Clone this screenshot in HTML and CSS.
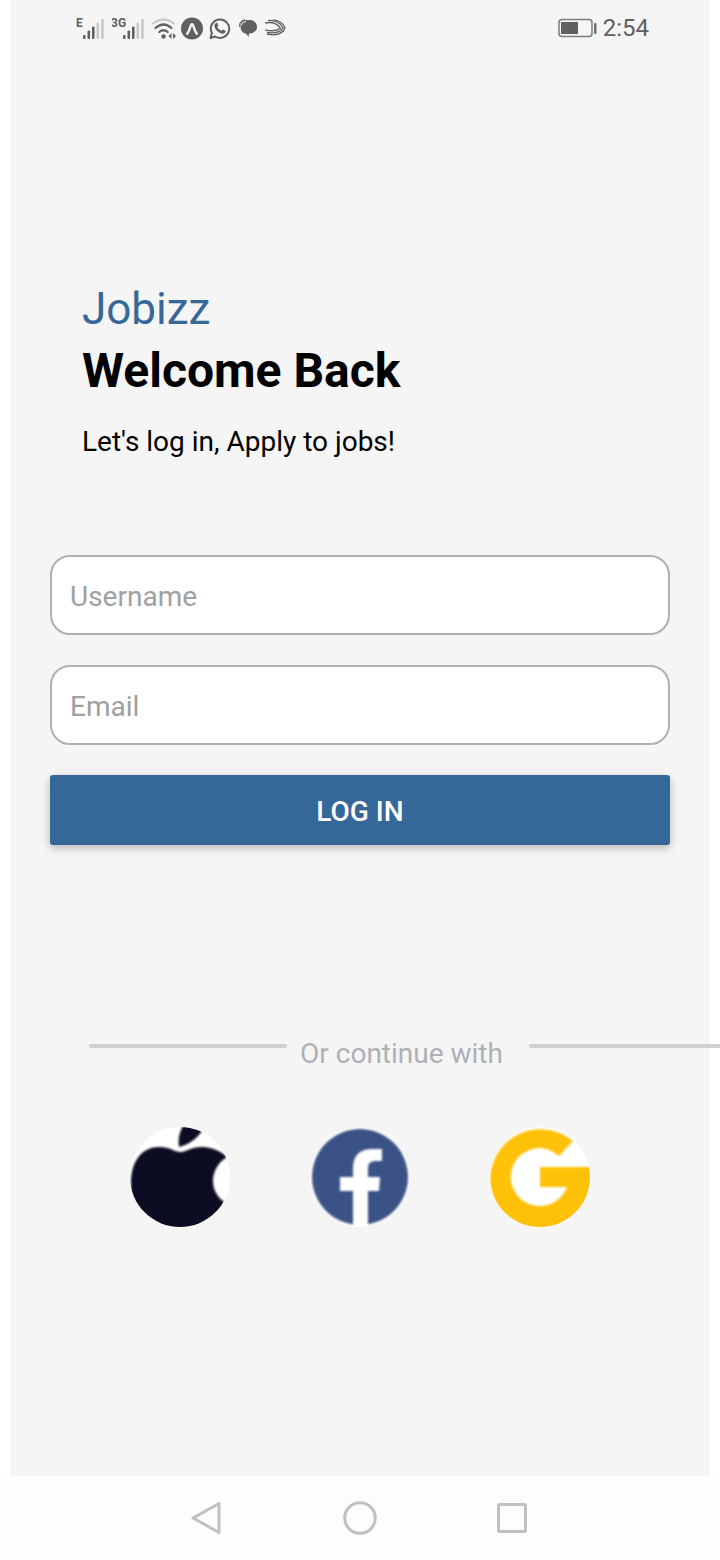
FILE: index.html
```html
<!DOCTYPE html>
<html lang="en">
<head>
<meta charset="utf-8">
<meta name="viewport" content="width=device-width, initial-scale=1">
<title>Jobizz</title>
<link rel="stylesheet" href="styles.css">
</head>
<body>
<div class="page">
  <div class="screen">
    <header class="status">
      <div class="status-icons">
        <svg width="28" height="24" viewBox="0 0 28 24" fill="#606060">
          <text class="network" x="0" y="11">E</text>
          <rect x="7" y="19" width="2.6" height="4" rx="1"/><rect x="11.5" y="14.5" width="2.6" height="8.5" rx="1"/><rect x="16" y="10.5" width="2.6" height="12.5" rx="1"/>
          <g fill="#cacaca"><rect x="20.5" y="6.5" width="2.6" height="16.5" rx="1"/><rect x="25" y="3" width="2.8" height="20" rx="1"/></g>
        </svg>
        <svg width="32" height="24" viewBox="0 0 32 24" fill="#606060">
          <text class="network" x="-1" y="11">3G</text>
          <rect x="11" y="19" width="2.6" height="4" rx="1"/><rect x="15.5" y="14.5" width="2.6" height="8.5" rx="1"/><rect x="20" y="10.5" width="2.6" height="12.5" rx="1"/>
          <g fill="#cacaca"><rect x="24.5" y="6.5" width="2.6" height="16.5" rx="1"/><rect x="29" y="3" width="2.8" height="20" rx="1"/></g>
        </svg>
        <svg width="24" height="24" viewBox="0 0 24 24" fill="none" stroke-width="2.2" stroke-linecap="round">
          <path d="M1.200 7.500Q11.500 -.5 22 7.500" stroke="#cacaca"/>
          <path d="M3.500 12Q11.500 5 19.500 12M7.300 16Q11.500 12.500 15.700 16" stroke="#606060"/>
          <circle cx="11.500" cy="20.500" r="2.200" fill="#606060"/>
          <path d="M19.500 17v6l-3-3zM21 17v6l3-3z" fill="#606060"/>
        </svg>
        <svg class="gap-small" width="22" height="24" viewBox="0 0 22 24">
          <circle cx="11" cy="12.500" r="11" fill="#606060"/>
          <path d="M6.200 17.700C8 15.500 9 12 10 9Q11 7.300 12 9C13 12 14 15.500 15.800 17.700" fill="none" stroke="#f4f4f4" stroke-width="2.400" stroke-linecap="round"/>
        </svg>
        <svg width="22" height="24" viewBox="0 0 22 24">
          <path d="M1.500 22l1.400-5A9.200 9.200 0 1 1 6.200 20.500z" fill="none" stroke="#606060" stroke-width="2" stroke-linejoin="round"/>
          <path d="M6.700 7.200c.9-.7 1.500-.4 1.800.4l.7 1.700c.2.600-.6 1.300-.9 1.700 1 1.800 2.300 3 4.200 3.800.5-.4 1-1.500 1.600-1.300l2 1c.8.400.4 1.600-.2 2.300-1.600 1.600-4.200.8-6.300-.7-2.200-1.600-4-4-4.200-6.100-.1-1.200.5-2.200 1.300-2.800z" fill="#606060"/>
        </svg>
        <svg width="18" height="24" viewBox="0 0 18 24" fill="#606060">
          <path d="M5 4h6a6.800 6.800 0 0 1 7 7c0 4-3.500 6.500-8 6.800L9.500 21Q8 18 6 17.300C3.500 17 2.500 15 2 13.500L1.500 11Q1 5 5 4z"/>
          <path d="M.6 11Q0 4.200 6 3.800" fill="none" stroke="#606060" stroke-width="1"/>
          <path d="M2.300 9.500Q3 5.500 7 5.300" fill="none" stroke="#f4f4f4"/>
        </svg>
        <svg width="21" height="24" viewBox="0 0 21 24" fill="none" stroke="#606060" stroke-width="1.300" stroke-linejoin="round">
          <path d="M8 3.800C13 4 18 7 20 11.500C19 16 15 18.500 8 18.800L2 18"/>
          <path d="M3 4.500C10 4 15.500 7 18 11.800C15.500 16 10 17.500 2 16.500"/>
          <path d="M0 7C7 5.500 12.500 8 15.500 12.200C12 15 7 15.500 0 13.800"/>
        </svg>
      </div>
      <div class="status-right">
        <svg width="39" height="20" viewBox="0 0 39 20">
          <rect x="1" y="1.500" width="33" height="17" rx="3" fill="none" stroke="#7c7c7c" stroke-width="1.500"/>
          <path d="M3 4h17v12H3z" fill="#606060"/>
          <rect x="36" y="5" width="2.500" height="11" rx="1" fill="#707070"/>
        </svg>
        <span>2:54</span>
      </div>
    </header>

    <main class="login">
      <div class="intro">
        <p class="brand">Jobizz</p>
        <h1 class="title">Welcome Back</h1>
        <p class="subtitle">Let's log in, Apply to jobs!</p>
      </div>
      <form class="form">
        <input class="field" type="text" placeholder="Username" aria-label="Username">
        <input class="field" type="email" placeholder="Email" aria-label="Email">
        <button class="submit" type="button">LOG IN</button>
      </form>
      <div class="divider">
        <span class="line"></span>
        <span class="divider-text">Or continue with</span>
        <span class="line"></span>
      </div>
      <div class="socials">
        <button class="social" type="button" aria-label="Apple">
          <svg viewBox="0 0 100 100">
            <g class="soft">
              <path d="M1 60C0 34 12 20 29 20C40 20 45 25 50 25C56 25 63 19 74 20C84 21 92 25 97 30C79 41 78 66 96 76L110 110H-10z" fill="#0c0c22"/>
              <path d="M49 20C48 12 49 4 55-4H76C72 7 62 17 49 20z" fill="#0c0c22"/>
            </g>
          </svg>
        </button>
        <button class="social" type="button" aria-label="Facebook">
          <svg viewBox="0 0 100 100">
            <g class="soft">
              <circle cx="50" cy="50" r="48" fill="#3b5286"/>
              <path d="M43 102V64H30V50H43V42C43 28 50 22 62 22H72V34H65Q58 34 58 41V50H70L69 64H58V102z" fill="#fff"/>
            </g>
          </svg>
        </button>
        <button class="social" type="button" aria-label="Google">
          <svg viewBox="0 0 100 100">
            <g class="soft">
              <path d="M83 14L69 29C61 23 56 21 49 21A29 29 0 1 0 77 60H50V40H101V50A50.500 50.500 0 1 1 83 14z" fill="#ffc107"/>
            </g>
          </svg>
        </button>
      </div>
    </main>
  </div>

  <nav class="system-nav">
    <button class="nav-button" type="button" aria-label="Back"><svg width="34" height="36" viewBox="0 0 34 36"><path d="M28 3.500v29L2 18z"/></svg></button>
    <button class="nav-button" type="button" aria-label="Home"><svg width="34" height="36" viewBox="0 0 34 36"><circle cx="17" cy="18" r="15.300"/></svg></button>
    <button class="nav-button" type="button" aria-label="Recent apps"><svg width="34" height="36" viewBox="0 0 34 36"><rect x="3.500" y="4.500" width="27" height="27" rx="1"/></svg></button>
  </nav>
</div>
</body>
</html>
```

FILE: styles.css
```css
* {
  box-sizing: border-box;
}

body {
  margin: 0;
  background: #fff;
  color: #000;
  font-family: Roboto, "Liberation Sans", sans-serif;
  font-size: 28px;
  line-height: 32px;
}

h1,
p {
  margin: 0;
}

button,
input {
  font: inherit;
}

svg {
  display: block;
}

.page {
  display: flex;
  flex-direction: column;
  min-height: 100vh;
  overflow: hidden;
}

.screen {
  flex: 1;
  margin: 0 10px;
  background: #f5f5f5;
}

.status {
  display: flex;
  justify-content: space-between;
  align-items: center;
  height: 56px;
  padding: 0 61px 0 66px;
  color: #606060;
  font-size: 24px;
}

.status-icons {
  display: flex;
  gap: 8px;
}

.status-icons .gap-small {
  margin-left: -3px;
  margin-right: -2px;
}

.network {
  font-size: 12px;
  font-weight: 700;
}

.status-right {
  display: flex;
  align-items: center;
  gap: 6px;
}

.login {
  padding: 224px 40px 0;
}

.intro {
  padding-left: 32px;
}

.brand {
  color: #356899;
  font-size: 44px;
  line-height: 58px;
}

.title {
  font-size: 48px;
  font-weight: 700;
  line-height: 66px;
}

.subtitle {
  margin-top: 22px;
}

.form {
  display: flex;
  flex-direction: column;
  gap: 30px;
  margin-top: 97px;
}

.field {
  width: 100%;
  height: 80px;
  padding: 2px 18px 0;
  border: 2px solid #afb0b6;
  border-radius: 20px;
  background: #fff;
  color: #000;
}

.field::placeholder {
  color: #a0a0a0;
  opacity: 1;
}

.submit {
  height: 70px;
  padding: 4px 0 0;
  border: 0;
  border-radius: 3px;
  background: #356899;
  box-shadow: 0 3px 8px rgba(0, 0, 0, 0.25);
  color: #fff;
  font-weight: 500;
}

.divider {
  display: flex;
  margin: 192px -57px 0 39px;
  color: #afb0b6;
}

.line {
  flex: 1;
  height: 4px;
  margin-top: 7px;
  border-radius: 2px;
  background: #d0d0d0;
}

.divider-text {
  padding: 1px 26px 0 13px;
}

.socials {
  display: flex;
  justify-content: center;
  gap: 80px;
  margin-top: 57px;
}

.social {
  width: 100px;
  height: 100px;
  padding: 0;
  border: 0;
  border-radius: 50%;
  background: #fff;
  overflow: hidden;
}

.soft {
  filter: blur(1px);
}

.system-nav {
  display: flex;
  justify-content: center;
  align-items: center;
  gap: 118px;
  height: 84px;
  background: #fdfdfd;
}

.nav-button {
  padding: 0;
  border: 0;
  background: none;
}

.nav-button svg {
  fill: none;
  stroke: #c0c0c0;
  stroke-width: 3;
  stroke-linejoin: round;
}
```
